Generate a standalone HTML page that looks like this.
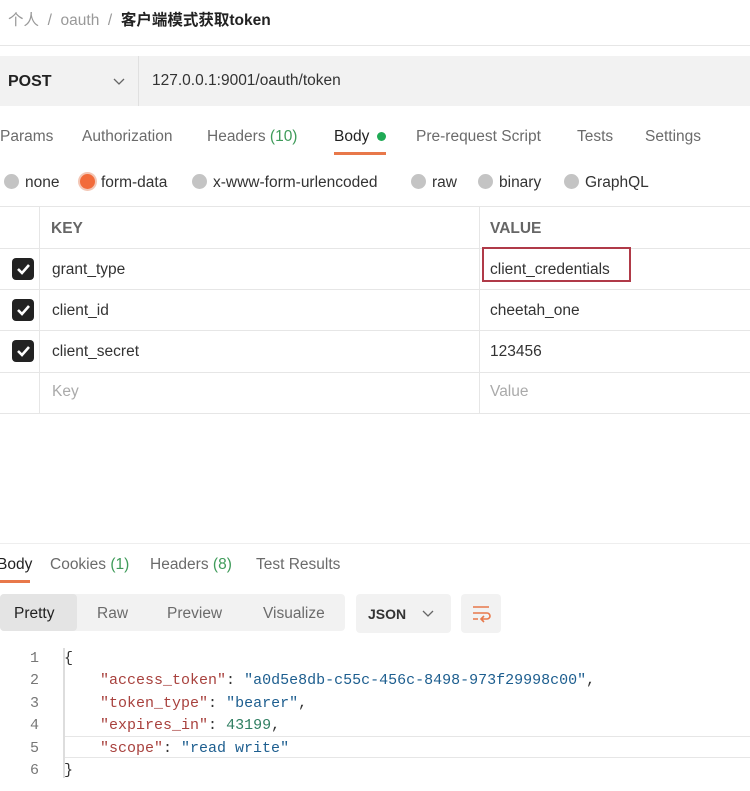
<!DOCTYPE html>
<html><head><meta charset="utf-8"><style>
*{margin:0;padding:0;box-sizing:border-box}
body{width:750px;height:791px;background:#fff;position:relative;overflow:hidden;font-family:"Liberation Sans","Noto Sans CJK SC",sans-serif;color:#333;font-size:15.5px}
.a{position:absolute;white-space:nowrap}
.g{color:#6b6b6b}
.n{color:#3f9b5a}
.mono{font-family:"Liberation Mono",monospace;font-size:15px}
.radio{position:absolute;width:15px;height:15px;border-radius:50%;background:#c4c4c4}
.cb{position:absolute;left:12px;width:22px;height:22px;background:#222;border-radius:4px}
.hl{position:absolute;height:1px;background:#e6e6e6}
</style></head><body>
<div class="a" style="left:8px;top:8px;color:#999;font-size:15.5px">个人 &nbsp;/&nbsp; oauth &nbsp;/&nbsp; <span style="color:#222;font-weight:bold">客户端模式获取token</span></div>
<div class="hl" style="left:0;top:45px;width:750px"></div>
<div class="a" style="left:0;top:56px;width:750px;height:50px;background:#f2f2f2"></div>
<div class="a" style="left:138px;top:56px;width:1px;height:50px;background:#e0e0e0"></div>
<div class="a" style="left:8px;top:73px;font-weight:bold;color:#222;font-size:16px">POST</div>
<svg class="a" style="left:113px;top:76px" width="12" height="10"><path d="M1 3l5 5 5-5" stroke="#666" fill="none" stroke-width="1.3"/></svg>
<div class="a" style="left:152px;top:72px;color:#333;font-size:15.5px">127.0.0.1:9001/oauth/token</div>
<div class="a g" style="left:0;top:128px">Params</div>
<div class="a g" style="left:82px;top:128px">Authorization</div>
<div class="a g" style="left:207px;top:128px">Headers <span class="n">(10)</span></div>
<div class="a" style="left:334px;top:128px;color:#222">Body</div>
<div class="a" style="left:377px;top:132px;width:9px;height:9px;border-radius:50%;background:#1faa55"></div>
<div class="a" style="left:334px;top:152px;width:52px;height:3px;background:#e8784a"></div>
<div class="a g" style="left:416px;top:128px">Pre-request Script</div>
<div class="a g" style="left:577px;top:128px">Tests</div>
<div class="a g" style="left:645px;top:128px">Settings</div>
<div class="radio" style="left:4px;top:174px"></div><div class="a" style="left:25px;top:174px">none</div>
<div class="radio" style="left:80px;top:174px;background:#f26b3a;box-shadow:0 0 0 2px #f3c6b5"></div><div class="a" style="left:101px;top:174px">form-data</div>
<div class="radio" style="left:192px;top:174px"></div><div class="a" style="left:213px;top:174px">x-www-form-urlencoded</div>
<div class="radio" style="left:411px;top:174px"></div><div class="a" style="left:432px;top:174px">raw</div>
<div class="radio" style="left:478px;top:174px"></div><div class="a" style="left:499px;top:174px">binary</div>
<div class="radio" style="left:564px;top:174px"></div><div class="a" style="left:585px;top:174px">GraphQL</div>
<div class="hl" style="left:0;top:206px;width:750px"></div>
<div class="hl" style="left:0;top:248px;width:750px"></div>
<div class="hl" style="left:0;top:289px;width:750px"></div>
<div class="hl" style="left:0;top:330px;width:750px"></div>
<div class="hl" style="left:0;top:372px;width:750px"></div>
<div class="hl" style="left:0;top:413px;width:750px"></div>
<div class="a" style="left:39px;top:206px;width:1px;height:207px;background:#e6e6e6"></div>
<div class="a" style="left:479px;top:206px;width:1px;height:207px;background:#e6e6e6"></div>
<div class="a g" style="left:51px;top:220px;font-weight:bold;color:#666">KEY</div>
<div class="a g" style="left:490px;top:220px;font-weight:bold;color:#666">VALUE</div>
<div class="cb" style="top:258px"></div><div class="cb" style="top:299px"></div><div class="cb" style="top:340px"></div>
<svg class="a" style="left:12px;top:258px" width="22" height="110"><g stroke="#fff" stroke-width="2.6" fill="none"><path d="M6 11l4 4 7-8"/><path d="M6 52l4 4 7-8"/><path d="M6 93l4 4 7-8"/></g></svg>
<div class="a" style="left:52px;top:261px">grant_type</div>
<div class="a" style="left:52px;top:302px">client_id</div>
<div class="a" style="left:52px;top:343px">client_secret</div>
<div class="a" style="left:52px;top:383px;color:#aaa">Key</div>
<div class="a" style="left:482px;top:247px;width:149px;height:35px;border:2px solid #b03a48"></div>
<div class="a" style="left:490px;top:261px">client_credentials</div>
<div class="a" style="left:490px;top:302px">cheetah_one</div>
<div class="a" style="left:490px;top:343px">123456</div>
<div class="a" style="left:490px;top:383px;color:#aaa">Value</div>
<div class="hl" style="left:0;top:543px;width:750px;background:#eee"></div>
<div class="a" style="left:-3px;top:556px;color:#222">Body</div>
<div class="a" style="left:0;top:580px;width:30px;height:3px;background:#e8784a"></div>
<div class="a g" style="left:50px;top:556px">Cookies <span class="n">(1)</span></div>
<div class="a g" style="left:150px;top:556px">Headers <span class="n">(8)</span></div>
<div class="a g" style="left:256px;top:556px">Test Results</div>
<div class="a" style="left:0;top:594px;width:345px;height:37px;background:#f2f2f2;border-radius:4px"></div>
<div class="a" style="left:0;top:594px;width:77px;height:37px;background:#e4e4e4;border-radius:4px"></div>
<div class="a" style="left:14px;top:605px;color:#222">Pretty</div>
<div class="a g" style="left:97px;top:605px">Raw</div>
<div class="a g" style="left:167px;top:605px">Preview</div>
<div class="a g" style="left:263px;top:605px">Visualize</div>
<div class="a" style="left:356px;top:594px;width:95px;height:39px;background:#f2f2f2;border-radius:4px"></div>
<div class="a" style="left:368px;top:606px;font-weight:bold;font-size:14px;color:#333">JSON</div>
<svg class="a" style="left:422px;top:608px" width="12" height="10"><path d="M1 3l5 5 5-5" stroke="#666" fill="none" stroke-width="1.3"/></svg>
<div class="a" style="left:461px;top:594px;width:40px;height:39px;background:#f2f2f2;border-radius:4px"></div>
<svg class="a" style="left:471px;top:603px" width="20" height="20"><g stroke="#e8784a" stroke-width="1.6" fill="none"><path d="M2 4h16M2 10h14a3 3 0 0 1 0 6h-5M2 16h5M13 13l-3 3 3 3"/></g></svg>
<div class="a" style="left:63px;top:736px;width:687px;height:22px;border-top:1px solid #e6e6e6;border-bottom:1px solid #e6e6e6"></div>
<div class="a" style="left:63px;top:648px;width:2px;height:130px;background:#ddd"></div>
<div class="a mono" style="left:30px;top:648px;color:#777;line-height:22.4px">1<br>2<br>3<br>4<br>5<br>6</div>
<div class="a mono" style="left:64px;top:648px;line-height:22.4px;color:#333">{<br>&nbsp;&nbsp;&nbsp;&nbsp;<span style="color:#a8413d">"access_token"</span>: <span style="color:#1d5e8f">"a0d5e8db-c55c-456c-8498-973f29998c00"</span>,<br>&nbsp;&nbsp;&nbsp;&nbsp;<span style="color:#a8413d">"token_type"</span>: <span style="color:#1d5e8f">"bearer"</span>,<br>&nbsp;&nbsp;&nbsp;&nbsp;<span style="color:#a8413d">"expires_in"</span>: <span style="color:#2f7e61">43199</span>,<br>&nbsp;&nbsp;&nbsp;&nbsp;<span style="color:#a8413d">"scope"</span>: <span style="color:#1d5e8f">"read write"</span><br>}</div>
</body></html>
